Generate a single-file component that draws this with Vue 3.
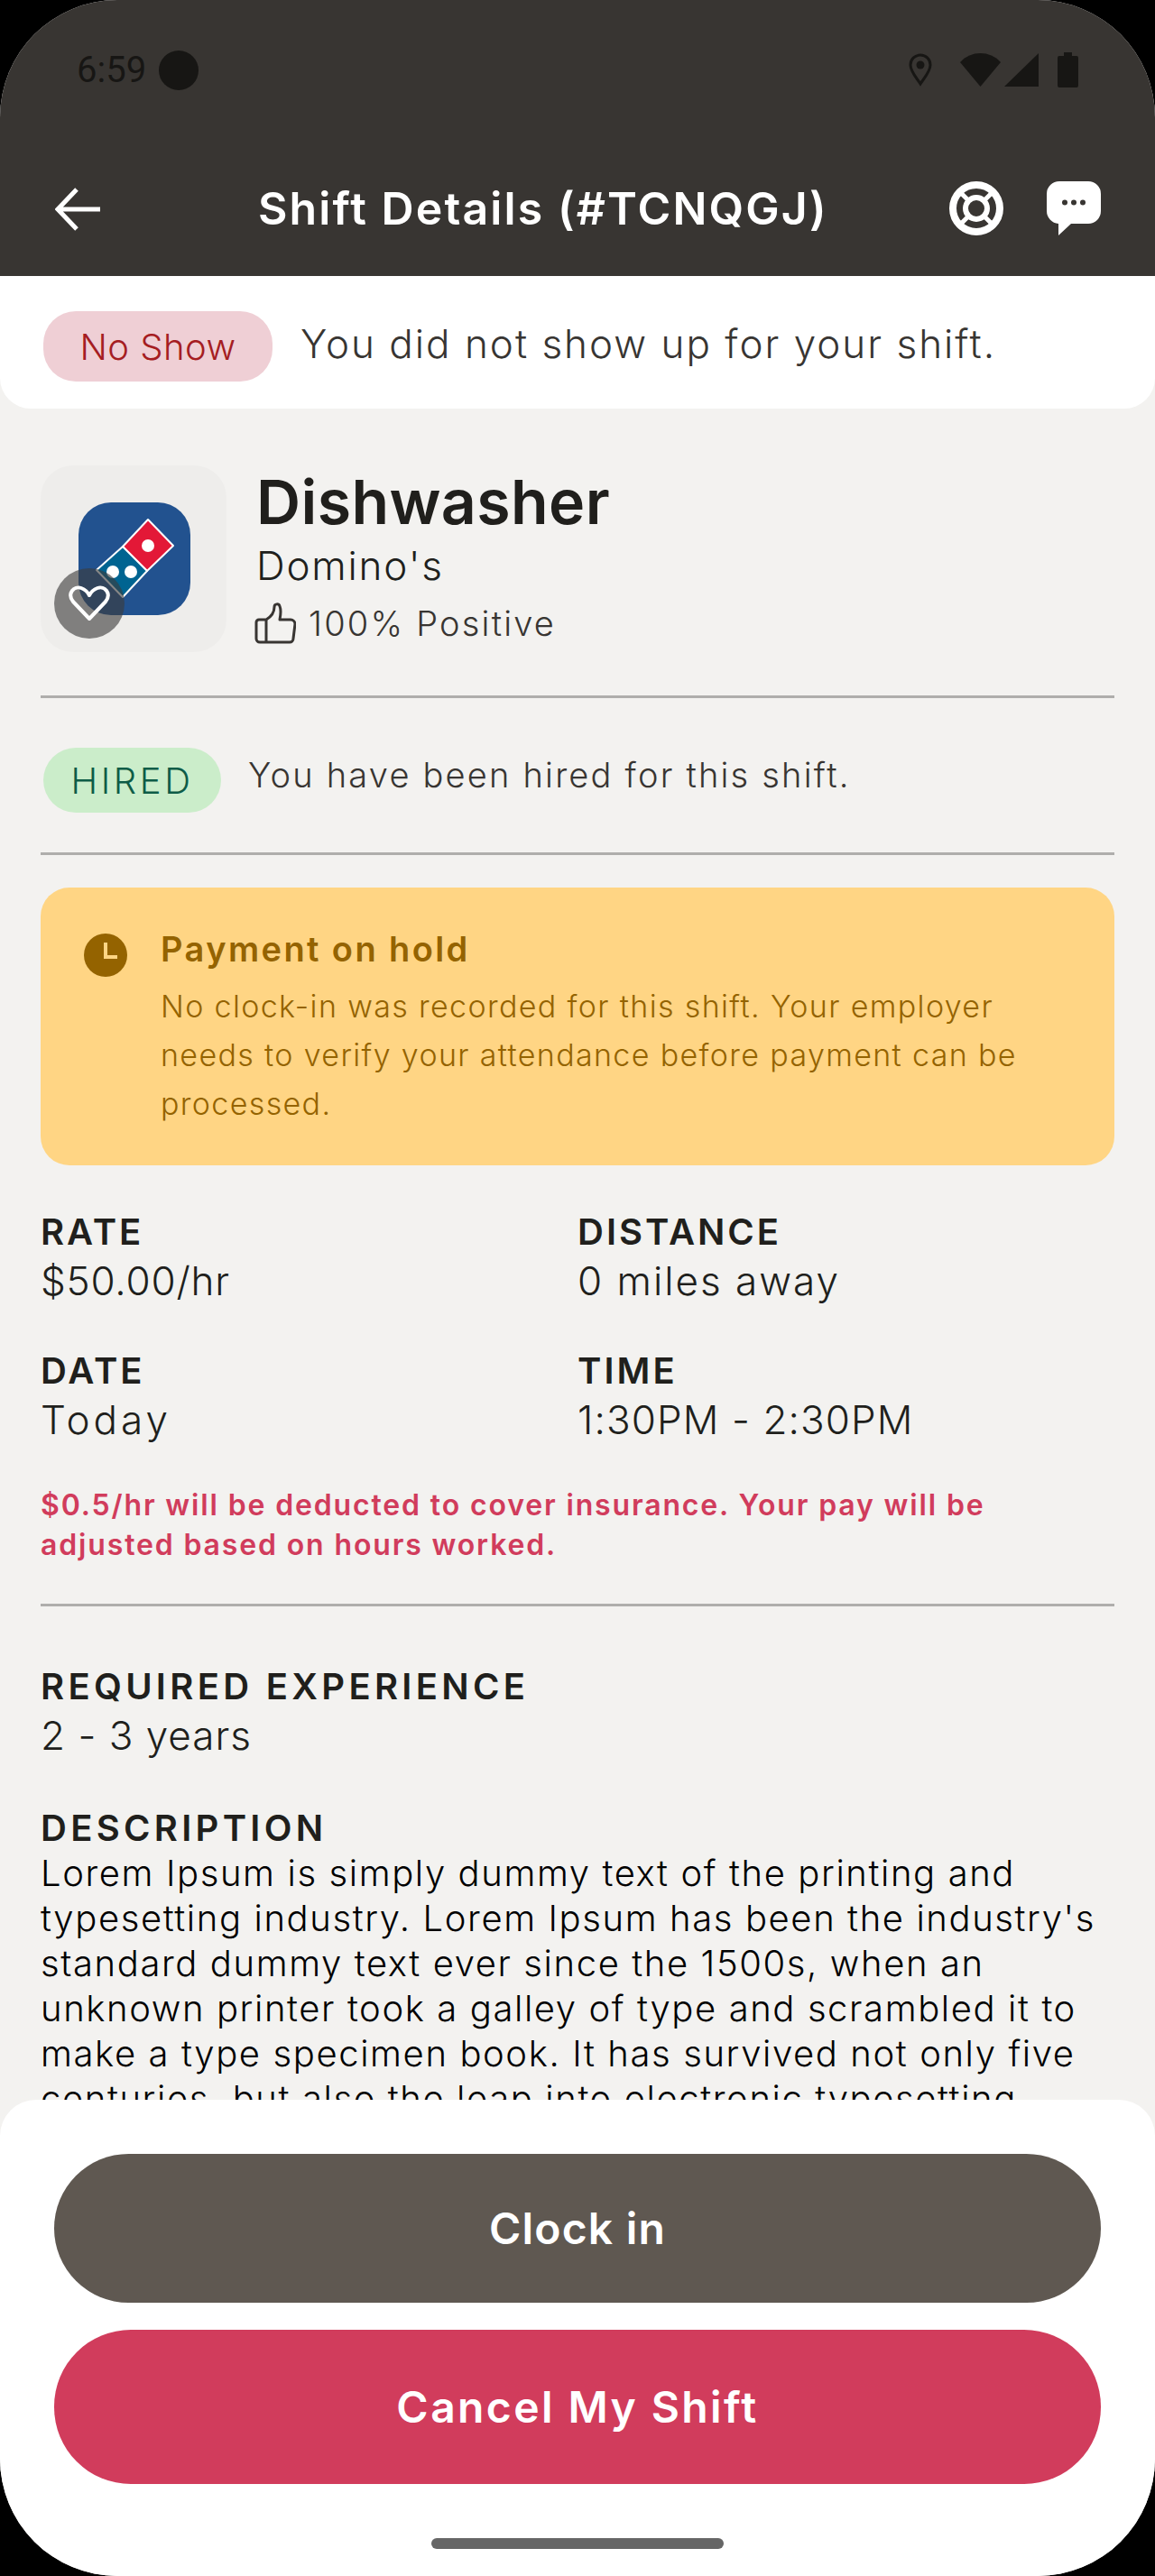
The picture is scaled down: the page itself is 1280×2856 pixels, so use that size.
<template>
  <div class="screen">
    <header class="header">
      <div class="status-bar">
        <span class="time">6:59</span>
        <span class="camera"></span>
        <svg class="pin" width="26" height="37" viewBox="0 0 26 37">
          <path d="M13 2C6.8 2 2 6.8 2 13c0 7.500 7 14.500 11 21 4-6.500 11-13.500 11-21 0-6.200-4.800-11-11-11z" fill="none" stroke="#171614" stroke-width="3" />
          <circle cx="13" cy="13" r="4.500" fill="#171614" />
        </svg>
        <svg class="wifi" width="45" height="37" viewBox="0 0 45 37">
          <path d="M0 10C12-3.300 33-3.300 45 10L22.500 37z" fill="#171614" />
        </svg>
        <svg class="signal" width="38" height="37" viewBox="0 0 38 37">
          <path d="M38 0v37H0z" fill="#171614" />
        </svg>
        <svg class="battery" width="23" height="39" viewBox="0 0 23 39">
          <path d="M7 0h9v4h5a2 2 0 0 1 2 2v31a2 2 0 0 1-2 2H2a2 2 0 0 1-2-2V6a2 2 0 0 1 2-2h5z" fill="#171614" />
        </svg>
      </div>
      <div class="nav">
        <svg class="back" width="50" height="50" viewBox="0 0 50 50">
          <path d="M24 3L3 25l21 22M3 25h47" fill="none" stroke="#fff" stroke-width="5" />
        </svg>
        <h1 class="title">Shift Details (#TCNQGJ)</h1>
        <div class="nav-icons">
          <svg width="60" height="60" viewBox="0 0 60 60">
            <circle cx="30" cy="30" r="26" fill="none" stroke="#fff" stroke-width="8" />
            <circle cx="30" cy="30" r="12" fill="none" stroke="#fff" stroke-width="6" />
            <path d="M11 11l9 9M49 11l-9 9M11 49l9-9M49 49l-9-9" stroke="#fff" stroke-width="5" />
          </svg>
          <svg width="60" height="60" viewBox="0 0 60 60">
            <path d="M14 0h32a14 14 0 0 1 14 14v19a14 14 0 0 1-14 14H27L13 60V47A14 14 0 0 1 0 33V14A14 14 0 0 1 14 0z" fill="#fff" />
            <circle cx="20" cy="23.500" r="3" fill="#383532" />
            <circle cx="30" cy="23.500" r="3" fill="#383532" />
            <circle cx="40" cy="23.500" r="3" fill="#383532" />
          </svg>
        </div>
      </div>
    </header>

    <main class="content">
      <section class="status-card">
        <span class="pill no-show">No Show</span>
        <span class="status-text">You did not show up for your shift.</span>
      </section>

      <div class="body">
        <section class="job">
          <div class="logo-box">
            <svg class="logo" width="124" height="125" viewBox="0 0 124 125">
              <rect width="124" height="125" rx="36" fill="#22528f" />
              <path d="M77 19l28 29-29 28-27-27z" fill="#e31837" stroke="#fff" stroke-width="2" stroke-linejoin="round" />
              <path d="M49 49l27 27-27 29-29-30z" fill="#006491" stroke="#fff" stroke-width="2" stroke-linejoin="round" />
              <circle cx="77" cy="48" r="7" fill="#fff" />
              <circle cx="38" cy="77" r="7" fill="#fff" />
              <circle cx="58" cy="77" r="7" fill="#fff" />
            </svg>
            <div class="fav">
              <svg width="46" height="40" viewBox="0 0 46 40">
                <path d="M23 37L5 18C-2 9 6 0 14 3c4 1.500 7 4 9 8 2-4 5-6.500 9-8 8-3 16 6 9 15z" fill="none" stroke="#fff" stroke-width="4" stroke-linejoin="round" />
              </svg>
            </div>
          </div>
          <div class="job-info">
            <h2 class="job-title">Dishwasher</h2>
            <div class="company">Domino's</div>
            <div class="rating">
              <svg width="46" height="46" viewBox="0 0 46 46">
                <path d="M13 19h-8a3 3 0 0 0-3 3v18a4 4 0 0 0 4 4h33a4 4 0 0 0 4-4l2-16a5 5 0 0 0-5-5H28c1-5 2-10 0-15-1-3-6-3-6 1 0 6-4 11-9 14zM13 19v25" fill="none" stroke="#383532" stroke-width="3" stroke-linejoin="round" />
              </svg>
              <span>100% Positive</span>
            </div>
          </div>
        </section>

        <hr class="divider" />

        <section class="hired-row">
          <span class="pill hired">HIRED</span>
          <span class="hired-text">You have been hired for this shift.</span>
        </section>

        <hr class="divider" />

        <section class="hold-card">
          <svg class="clock" width="48" height="48" viewBox="0 0 48 48">
            <circle cx="24" cy="24" r="24" fill="#946300" />
            <path d="M24 10v16h13" fill="none" stroke="#ffd584" stroke-width="4" />
          </svg>
          <div>
            <h3 class="hold-title">Payment on hold</h3>
            <p class="hold-text">
              No clock-in was recorded for this shift. Your employer needs to verify your attendance before payment can be processed.
            </p>
          </div>
        </section>

        <section class="facts">
          <div v-for="fact in facts" :key="fact.label">
            <div class="label">{{ fact.label }}</div>
            <div class="value" :style="{ letterSpacing: fact.spacing }">{{ fact.value }}</div>
          </div>
        </section>

        <p class="note">$0.5/hr will be deducted to cover insurance. Your pay will be adjusted based on hours worked.</p>

        <hr class="divider" />

        <section class="experience">
          <div class="label wide">REQUIRED EXPERIENCE</div>
          <div class="value">2 - 3 years</div>
        </section>

        <section class="description">
          <div class="label wide">DESCRIPTION</div>
          <p>
            Lorem Ipsum is simply dummy text of the printing and typesetting industry. Lorem Ipsum has been the industry's standard dummy text ever since the 1500s, when an unknown printer took a galley of type and scrambled it to make a type specimen book. It has survived not only five centuries, but also the leap into electronic typesetting, remaining essentially unchanged.
          </p>
        </section>
      </div>
    </main>

    <footer class="sheet">
      <button class="btn clock-in">Clock in</button>
      <button class="btn cancel">Cancel My Shift</button>
      <div class="home-bar"></div>
    </footer>
  </div>
</template>

<script setup>
const facts = [
  { label: "RATE", value: "$50.00/hr", spacing: "0.8px" },
  { label: "DISTANCE", value: "0 miles away", spacing: "2px" },
  { label: "DATE", value: "Today", spacing: "4px" },
  { label: "TIME", value: "1:30PM - 2:30PM", spacing: "1.1px" },
];
</script>

<style>
html,
body {
  background: #000;
}
</style>

<style scoped>
.screen {
  width: 1280px;
  height: 2856px;
  display: flex;
  flex-direction: column;
  overflow: hidden;
  background: #f3f2f0;
  border-radius: 130px;
  font-family: Inter, "Liberation Sans", sans-serif;
  color: #201f1c;
}

.header {
  height: 306px;
  flex: none;
  background: #383532;
}

.status-bar {
  height: 201px;
  padding: 56px 84px 0 85px;
  box-sizing: border-box;
  display: flex;
  align-items: flex-start;
}

.time {
  width: 91px;
  height: 44px;
  line-height: 44px;
  font-family: Roboto, sans-serif;
  font-size: 40px;
  color: #171614;
}

.camera {
  width: 44px;
  height: 44px;
  border-radius: 50%;
  background: #171614;
}

.pin {
  margin: 3px 0 0 787px;
}

.wifi {
  margin: 3px 0 0 31px;
}

.signal {
  margin: 3px 0 0 4px;
}

.battery {
  margin: 2px 0 0 21px;
}

.nav {
  display: flex;
  align-items: flex-start;
  padding: 0 60px 0 61px;
}

.back {
  margin-top: 6px;
}

.title {
  margin: -2px 0 0 175px;
  font-size: 50px;
  font-weight: 600;
  line-height: 64px;
  letter-spacing: 2.1px;
  color: #fff;
  white-space: nowrap;
}

.nav-icons {
  margin-left: auto;
  display: flex;
  gap: 48px;
}

.content {
  flex: 1;
  min-height: 0;
  overflow: hidden;
}

.status-card {
  height: 147px;
  box-sizing: border-box;
  padding: 39px 48px 0;
  display: flex;
  align-items: flex-start;
  background: #fff;
  border-radius: 0 0 34px 34px;
}

.pill {
  display: flex;
  align-items: center;
  justify-content: center;
  border-radius: 36px;
}

.no-show {
  width: 254px;
  height: 78px;
  background: #efcfd5;
  color: #a51d22;
  font-size: 40px;
  font-weight: 300;
  letter-spacing: 0.5px;
}

.status-text {
  margin: 8px 0 0 31px;
  font-size: 44px;
  font-weight: 300;
  line-height: 56px;
  letter-spacing: 2px;
  color: #383532;
}

.body {
  padding: 63px 45px 0;
}

.job {
  display: flex;
  height: 255px;
}

.logo-box {
  position: relative;
  width: 206px;
  height: 207px;
  flex: none;
  display: flex;
  align-items: center;
  justify-content: center;
  background: #eeedeb;
  border-radius: 36px;
}

.logo {
  margin-left: 2px;
  margin-bottom: 1px;
}

.fav {
  position: absolute;
  left: 15px;
  top: 114px;
  width: 78px;
  height: 78px;
  display: flex;
  align-items: center;
  justify-content: center;
  border-radius: 50%;
  background: rgba(60, 60, 60, 0.62);
}

.job-info {
  margin-left: 33px;
}

.job-title {
  margin: 0;
  font-size: 68px;
  font-weight: 600;
  line-height: 80px;
  letter-spacing: 0.4px;
}

.company {
  margin-top: 3px;
  font-size: 44px;
  font-weight: 300;
  line-height: 56px;
  letter-spacing: 1.8px;
}

.rating {
  margin: 11px 0 0 -2px;
  display: flex;
  align-items: center;
  gap: 14px;
  font-size: 38px;
  font-weight: 300;
  line-height: 50px;
  letter-spacing: 2.2px;
  color: #383532;
}

.divider {
  margin: 0;
  height: 3px;
  border: 0;
  background: #afaeac;
}

.hired-row {
  display: flex;
  align-items: flex-start;
  height: 171px;
  box-sizing: border-box;
  padding: 55px 3px 0;
}

.hired {
  width: 197px;
  height: 72px;
  background: #cbedca;
  color: #0e5c47;
  font-size: 40px;
  font-weight: 300;
  letter-spacing: 3.6px;
}

.hired-text {
  margin: 5px 0 0 30px;
  font-size: 38px;
  font-weight: 300;
  line-height: 50px;
  letter-spacing: 2.2px;
  color: #383532;
}

.hold-card {
  margin-top: 36px;
  height: 308px;
  box-sizing: border-box;
  padding: 51px 48px 0;
  display: flex;
  gap: 37px;
  background: #ffd584;
  border-radius: 32px;
  color: #946300;
}

.clock {
  flex: none;
}

.hold-title {
  margin: -8px 0 0;
  font-size: 38px;
  font-weight: 600;
  line-height: 50px;
  letter-spacing: 2.4px;
}

.hold-text {
  margin: 12px 0 0;
  font-size: 34px;
  font-weight: 300;
  line-height: 54px;
  letter-spacing: 1.35px;
}

.facts {
  margin-top: 49px;
  display: grid;
  grid-template-columns: 595px 1fr;
  row-gap: 47px;
}

.label {
  font-size: 40px;
  font-weight: 600;
  line-height: 50px;
  letter-spacing: 3px;
}

.label.wide {
  letter-spacing: 4.3px;
}

.value {
  margin-top: 1px;
  font-size: 44px;
  font-weight: 300;
  line-height: 56px;
  letter-spacing: 1px;
}

.note {
  margin: 45px 0 0;
  max-width: 1100px;
  font-size: 32px;
  font-weight: 600;
  line-height: 44px;
  letter-spacing: 1.85px;
  color: #d13c5c;
}

.note + .divider {
  margin-top: 43px;
}

.experience {
  margin-top: 64px;
}

.description {
  margin-top: 50px;
}

.description p {
  margin: 0;
  font-size: 40px;
  font-weight: 300;
  line-height: 50px;
  letter-spacing: 1.6px;
  color: #000;
}

.sheet {
  flex: none;
  height: 528px;
  box-sizing: border-box;
  padding: 60px 60px 0;
  display: flex;
  flex-direction: column;
  background: #fff;
  border-radius: 40px 40px 0 0;
}

.btn {
  flex: none;
  width: 100%;
  border: 0;
  border-radius: 85px;
  font-family: inherit;
  font-size: 48px;
  font-weight: 600;
  color: #fff;
}

.clock-in {
  height: 165px;
  background: #5f5851;
  letter-spacing: 1.2px;
}

.cancel {
  margin-top: 30px;
  height: 171px;
  background: #d13c5c;
  letter-spacing: 2.4px;
}

.home-bar {
  margin: 60px auto 0;
  width: 324px;
  height: 12px;
  border-radius: 6px;
  background: #666;
}
</style>
